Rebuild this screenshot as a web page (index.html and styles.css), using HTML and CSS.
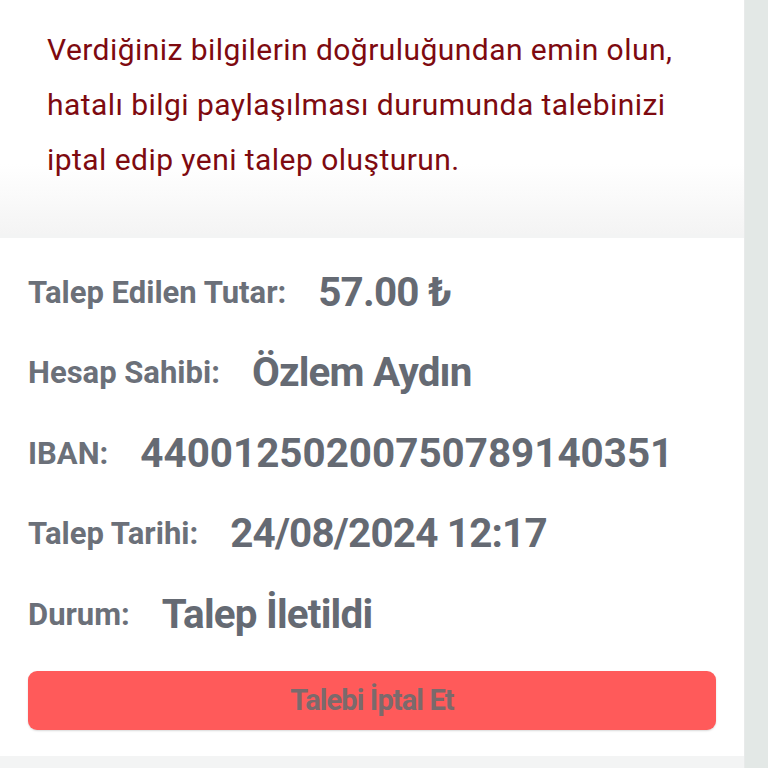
FILE: index.html
```html
<!DOCTYPE html>
<html lang="tr">
<head>
<meta charset="utf-8">
<link rel="stylesheet" href="styles.css">
</head>
<body>
<div class="page">
  <main class="content">
    <section class="notice">
      <p>Verdiğiniz bilgilerin doğruluğundan emin olun,<br>hatalı bilgi paylaşılması durumunda talebinizi<br>iptal edip yeni talep oluşturun.</p>
    </section>
    <section class="card">
      <div class="row"><span class="label">Talep Edilen Tutar:</span><span class="value">57.00 ₺</span></div>
      <div class="row"><span class="label">Hesap Sahibi:</span><span class="value">Özlem Aydın</span></div>
      <div class="row"><span class="label">IBAN:</span><span class="value value-num">44001250200750789140351</span></div>
      <div class="row"><span class="label">Talep Tarihi:</span><span class="value">24/08/2024 12:17</span></div>
      <div class="row"><span class="label">Durum:</span><span class="value">Talep İletildi</span></div>
      <button class="cancel">Talebi İptal Et</button>
    </section>
  </main>
  <aside class="rail"></aside>
</div>
</body>
</html>
```
FILE: styles.css
```css
html, body {
  margin: 0;
  padding: 0;
  height: 100%;
  overflow: hidden;
}
body {
  font-family: Roboto, "Noto Sans", sans-serif;
  background: #f3f4f4;
}
.page {
  display: flex;
  height: 768px;
}
.content {
  width: 744px;
  display: flex;
  flex-direction: column;
  gap: 4px;
}
.rail {
  flex: 1;
  background: #e3e8e6;
  border-left: 1px solid #e8eaea;
}
.notice {
  height: 234px;
  background: linear-gradient(to bottom, #ffffff 0%, #ffffff 70%, #f4f4f4 100%);
  padding: 22px 0 0 47px;
  box-sizing: border-box;
}
.notice p {
  margin: 0;
  color: #7e0a10;
  font-size: 30px;
  line-height: 55px;
  letter-spacing: 0.45px;
}
.card {
  background: #ffffff;
  height: 518px;
  box-sizing: border-box;
  padding: 14px 28px 0 28px;
  display: flex;
  flex-direction: column;
}
.row {
  display: flex;
  height: 80.5px;
  align-items: center;
}
.label {
  font-weight: 700;
  font-size: 31px;
  color: #6b7079;
  margin-right: 32px;
}
.value {
  font-weight: 700;
  font-size: 40.4px;
  color: #656a73;
  letter-spacing: -0.8px;
}
.value-num {
  letter-spacing: 0;
}
.cancel {
  margin-top: 16px;
  width: 688px;
  height: 59px;
  border: none;
  border-radius: 9px;
  background: #ff5a5a;
  box-shadow: 0 1px 2px rgba(0,0,0,0.15);
  color: #7b6a6c;
  font-family: Roboto, sans-serif;
  font-weight: 700;
  font-size: 29px;
  letter-spacing: -0.9px;
}
```
